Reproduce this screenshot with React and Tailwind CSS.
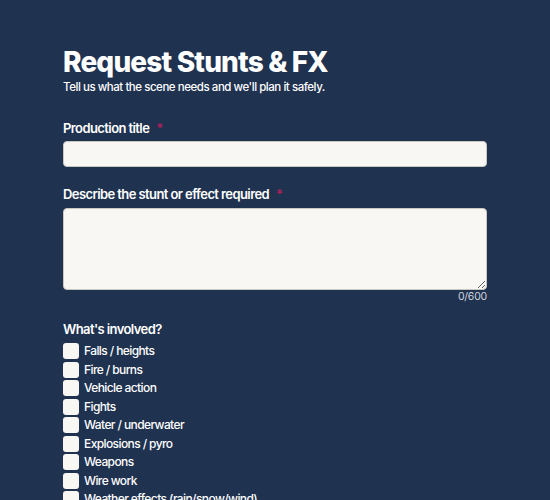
const options = [
  "Falls / heights",
  "Fire / burns",
  "Vehicle action",
  "Fights",
  "Water / underwater",
  "Explosions / pyro",
  "Weapons",
  "Wire work",
  "Weather effects (rain/snow/wind)",
];

function Label({ children }) {
  return (
    <label className="block text-[13px] font-semibold leading-[18px] tracking-[-0.045em] text-white">
      {children}
      <span className="ml-[7px] text-[#b0215a]">*</span>
    </label>
  );
}

export default function App() {
  return (
    <div className="min-h-[500px] bg-[#1f3250] font-['Inter','Liberation_Sans',sans-serif] text-white">
      <div className="mx-auto w-[424px] pt-[46px]">
        <h1 className="text-[28px] font-extrabold leading-[32px] tracking-[-0.03em]">Request Stunts &amp; FX</h1>
        <p className="mt-[1px] text-[11.5px] font-medium leading-[16px] tracking-[-0.04em]">Tell us what the scene needs and we'll plan it safely.</p>

        <div className="mt-[24px]">
          <Label>Production title</Label>
          <input className="mt-[4px] block h-[26px] w-full rounded-[4px] border border-[#c9c7c0] bg-[#f8f7f3] px-2 text-[13px] text-gray-900" />
        </div>

        <div className="mt-[18px]">
          <Label>Describe the stunt or effect required</Label>
          <textarea className="mt-[5px] block h-[82px] w-full rounded-[4px] border border-[#c9c7c0] bg-[#f8f7f3] px-2 py-1 text-[13px] text-gray-900" />
          <div className="text-right text-[10.5px] leading-[14px] tracking-[-0.02em] text-[#d0d4dc]">0/600</div>
        </div>

        <div className="mt-[16px]">
          <div className="text-[13px] font-semibold leading-[18px] tracking-[-0.045em]">What's involved?</div>
          <div className="mt-[5px] flex flex-col gap-[2.5px]">
            {options.map((o) => (
              <label key={o} className="flex items-center gap-[5px] text-[12px] font-medium leading-[16px] tracking-[-0.05em]">
                <span className="h-[16px] w-[16px] flex-none rounded-[3px] bg-[#f8f7f3]" />
                <span>{o}</span>
              </label>
            ))}
          </div>
        </div>
      </div>
    </div>
  );
}
